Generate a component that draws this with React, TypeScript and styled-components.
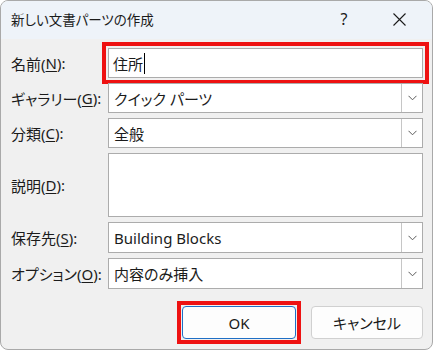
import React from "react";
import styled, { createGlobalStyle } from "styled-components";

const Global = createGlobalStyle`
  html, body { margin: 0; padding: 0; background: #ffffff; }
  body {
    font-family: "Noto Sans", "Noto Sans CJK JP", sans-serif;
    font-feature-settings: "palt";
    color: #1b1b1b;
  }
  * { box-sizing: border-box; }
`;

const Window = styled.div`
  width: 433px;
  height: 350px;
  border: 1px solid #a9a9a9;
  border-radius: 8px;
  overflow: hidden;
  background: #f0f0f0;
  display: flex;
  flex-direction: column;
`;

const TitleBar = styled.div`
  height: 38px;
  background: #eef3f9;
  display: flex;
  align-items: center;
  padding-left: 10px;
  padding-bottom: 2px;
  font-size: 13.5px;
`;

const Title = styled.div`
  flex: 1;
`;

const TitleButton = styled.div<{ $w: number }>`
  width: ${(p) => p.$w}px;
  height: 36px;
  display: flex;
  align-items: center;
  justify-content: center;
  font-size: 16px;
`;

const Body = styled.div`
  flex: 1;
  padding: 9px 9px 0 9px;
  display: flex;
  flex-direction: column;
`;

const Form = styled.div`
  display: grid;
  grid-template-columns: 98px 315px;
  grid-template-rows: 30px 30px 30px 64px 31px 31px;
  row-gap: 5px;
`;

const Label = styled.div`
  display: flex;
  align-items: center;
  font-size: 15px;
  padding-left: 1px;
  white-space: nowrap;
`;

const Key = styled.span`
  text-decoration: underline;
  text-underline-offset: 2px;
`;

const Highlight = styled.div<{ $offset: number }>`
  outline: 4px solid #ee1111;
  outline-offset: ${(p) => p.$offset}px;
  border-radius: 0;
`;

const TextBox = styled.div`
  height: 100%;
  background: #ffffff;
  border: 1px solid #acacac;
  display: flex;
  align-items: center;
  padding-left: 4px;
  font-size: 15px;
`;

const Caret = styled.span`
  display: inline-block;
  width: 1px;
  height: 21px;
  background: #000;
  margin-left: 1px;
`;

const Combo = styled.div`
  height: 100%;
  background: #ffffff;
  border: 1px solid #acacac;
  display: flex;
  align-items: stretch;
  font-size: 15px;
`;

const ComboValue = styled.div`
  flex: 1;
  display: flex;
  align-items: center;
  padding-left: 5px;
  white-space: nowrap;
`;

const DropButton = styled.div`
  width: 21px;
  border-left: 1px solid #c6c6c6;
  background: #ffffff;
  display: flex;
  align-items: center;
  justify-content: center;
`;

const TextArea = styled.div`
  height: 100%;
  background: #ffffff;
  border: 1px solid #acacac;
`;

const ButtonRow = styled.div`
  margin-top: 17px;
  display: flex;
  justify-content: flex-end;
  gap: 15px;
`;

const Button = styled.div<{ $primary?: boolean; $w: number }>`
  width: ${(p) => p.$w}px;
  height: 33px;
  border-radius: 4px;
  background: #fdfdfd;
  border: 1px solid ${(p) => (p.$primary ? "#1f6fc5" : "#d0d0d0")};
  display: flex;
  align-items: center;
  justify-content: center;
  font-size: 15px;
`;

const Chevron = () => (
  <svg width="9" height="6" viewBox="0 0 9 6">
    <path d="M0.5 0.8 L4.5 4.8 L8.5 0.8" fill="none" stroke="#5a5a5a" strokeWidth="1" />
  </svg>
);

const CloseIcon = () => (
  <svg width="13" height="13" viewBox="0 0 13 13">
    <path d="M0.5 0.5 L12.5 12.5 M12.5 0.5 L0.5 12.5" stroke="#1b1b1b" strokeWidth="1.1" />
  </svg>
);

const ComboBox = ({ value }: { value: string }) => (
  <Combo>
    <ComboValue>{value}</ComboValue>
    <DropButton>
      <Chevron />
    </DropButton>
  </Combo>
);

export default function App() {
  return (
    <>
      <Global />
      <Window>
        <TitleBar>
          <Title>新しい文書パーツの作成</Title>
          <TitleButton $w={46}>?</TitleButton>
          <TitleButton $w={64}>
            <CloseIcon />
          </TitleButton>
          <TitleButton $w={1} />
        </TitleBar>
        <Body>
          <Form>
            <Label>
              名前(<Key>N</Key>):
            </Label>
            <Highlight $offset={2}>
              <TextBox>
                住所
                <Caret />
              </TextBox>
            </Highlight>

            <Label>
              ギャラリー(<Key>G</Key>):
            </Label>
            <ComboBox value="クイック パーツ" />

            <Label>
              分類(<Key>C</Key>):
            </Label>
            <ComboBox value="全般" />

            <Label>
              説明(<Key>D</Key>):
            </Label>
            <TextArea />

            <Label>
              保存先(<Key>S</Key>):
            </Label>
            <ComboBox value="Building Blocks" />

            <Label>
              オプション(<Key>O</Key>):
            </Label>
            <ComboBox value="内容のみ挿入" />
          </Form>
          <ButtonRow>
            <Highlight $offset={1}>
              <Button $primary $w={114}>
                OK
              </Button>
            </Highlight>
            <Button $w={112}>キャンセル</Button>
          </ButtonRow>
        </Body>
      </Window>
    </>
  );
}
